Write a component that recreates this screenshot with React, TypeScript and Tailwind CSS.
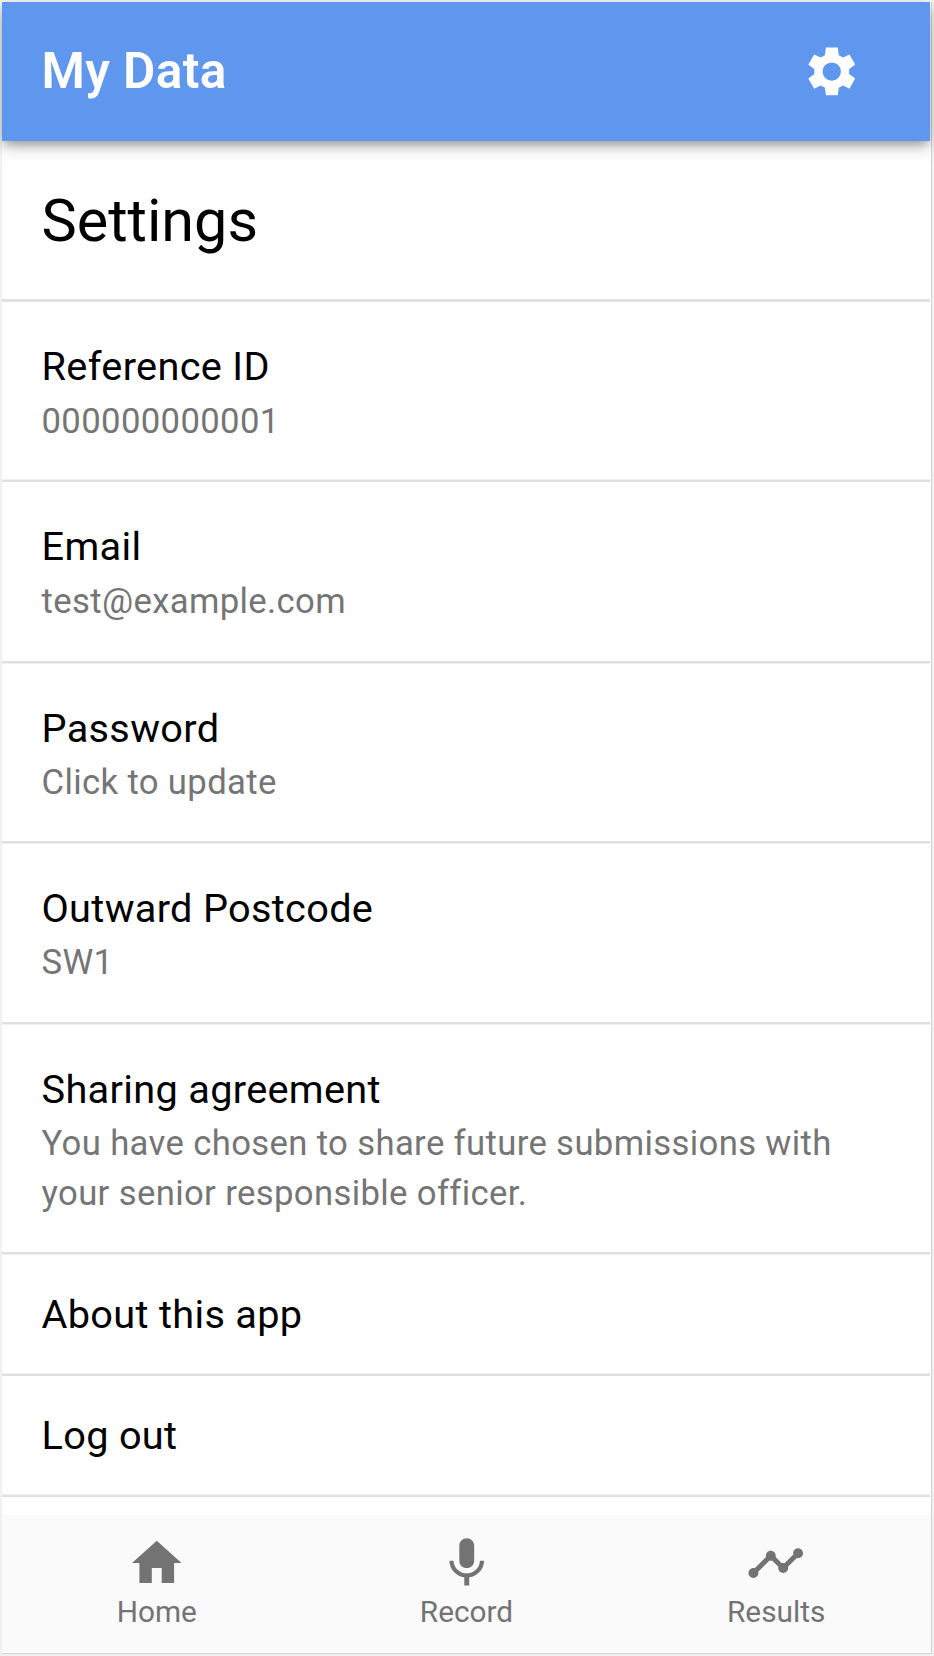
import React from "react";

type Item = { title: string; detail?: string; box: string; gap?: string };

const lightAbove = "shadow-[inset_0_-1px_0_#efefef]";
const lightBelow = "mb-px shadow-[0_1px_0_#efefef]";

const items: Item[] = [
  { title: "Reference ID", detail: "000000000001", box: `h-[180px] pt-[40px] ${lightAbove}`, gap: "mt-[4px]" },
  { title: "Email", detail: "test@example.com", box: `h-[181px] pt-[40px] ${lightBelow}`, gap: "mt-[4px]" },
  { title: "Password", detail: "Click to update", box: `h-[179px] pt-[40px] ${lightBelow}`, gap: "mt-[3px]" },
  { title: "Outward Postcode", detail: "SW1", box: `h-[180px] pt-[40px] ${lightBelow}`, gap: "mt-[3px]" },
  {
    title: "Sharing agreement",
    detail: "You have chosen to share future submissions with your senior responsible officer.",
    box: `h-[229px] pt-[40px] ${lightBelow}`,
    gap: "mt-[3px]",
  },
  { title: "About this app", box: `h-[121px] pt-[35px] ${lightAbove}` },
  { title: "Log out", box: `h-[121px] pt-[35px] ${lightAbove}` },
];

const tabs = [
  { label: "Home", d: "M10 20v-6h4v6h5v-8h3L12 3 2 12h3v8z" },
  {
    label: "Record",
    d: "M12 14c1.66 0 2.99-1.34 2.99-3L15 5c0-1.66-1.34-3-3-3S9 3.34 9 5v6c0 1.66 1.34 3 3 3zm5.3-3c0 3-2.54 5.1-5.3 5.1S6.7 14 6.7 11H5c0 3.41 2.72 6.23 6 6.72V21h2v-3.28c3.28-.48 6-3.3 6-6.72h-1.7z",
  },
  {
    label: "Results",
    d: "M23 8c0 1.1-.9 2-2 2-.18 0-.35-.02-.51-.07l-3.56 3.55c.05.16.07.34.07.52 0 1.1-.9 2-2 2s-2-.9-2-2c0-.18.02-.36.07-.52l-2.55-2.55c-.16.05-.34.07-.52.07s-.36-.02-.52-.07l-4.55 4.56c.05.16.07.33.07.51 0 1.1-.9 2-2 2s-2-.9-2-2 .9-2 2-2c.18 0 .35.02.51.07l4.56-4.55C8.02 9.36 8 9.18 8 9c0-1.1.9-2 2-2s2 .9 2 2c0 .18-.02.36-.07.52l2.55 2.55c.16-.05.34-.07.52-.07s.36.02.52.07l3.55-3.56C19.02 8.35 19 8.18 19 8c0-1.1.9-2 2-2s2 .9 2 2z",
  },
];

const gear =
  "M107.5 52H143L146 75.500L159 82L178 73L195 103L177 117V131L195 145L178 175L159 166L146 172.500L143 195H107.500L104.500 172.500L92 166L72.500 175L55 145L73 131V117L55 103L72.500 73L92 82L104.500 75.500ZM125 96.500a27.500 27.500 0 1 0 0 55a27.500 27.500 0 1 0 0-55Z";

export default function App() {
  return (
    <div className="h-[1656px] w-[934px] bg-[#f1f1f1] pt-[2px] pl-[2px] font-[Roboto,sans-serif]">
      <div className="flex h-[1652px] w-[930px] flex-col border-r border-b border-[#d2d2d2] bg-white pr-px pb-px">
        <header className="relative z-10 flex h-[139px] shrink-0 items-center justify-between bg-[#5e97ed] pr-[68.5px] pl-[39.5px] text-white shadow-[0_5px_10px_-2px_rgba(0,0,0,0.36),0_8px_18px_0_rgba(0,0,0,0.12)]">
          <h1 className="-mt-[1px] text-[49.6px] leading-[60px] font-[600] tracking-[0.4px]">My Data</h1>
          <svg viewBox="36 35.5 178 178" className="size-[59.5px]" fill="currentColor">
            <path fillRule="evenodd" d={gear} />
          </svg>
        </header>
        <main className="flex min-h-0 flex-1 flex-col overflow-hidden">
          <h2 className="h-[161px] shrink-0 border-b-[3px] border-[#e0e0e0] pt-[45px] pl-[39.5px] text-[59.3px] leading-[70px] text-black">
            Settings
          </h2>
          {items.map((item) => (
            <section key={item.title} className={`shrink-0 border-b-[2px] border-[#e0e0e0] pr-[80px] pl-[39.5px] ${item.box}`}>
              <h3 className="text-[39.7px] leading-[50px] tracking-[0.32px] text-black">{item.title}</h3>
              {item.detail && (
                <p className={`text-[34.7px] leading-[50px] tracking-[0.35px] text-[#757575] ${item.gap}`}>{item.detail}</p>
              )}
            </section>
          ))}
        </main>
        <nav className="-mr-px grid h-[137px] shrink-0 grid-cols-3 bg-[#fafafa] text-[#737373]">
          {tabs.map((tab) => (
            <div key={tab.label} className="flex flex-col items-center pt-[18px]">
              <svg viewBox="0 -0.15 24 24" className="size-[59.5px]" fill="currentColor">
                <path d={tab.d} />
              </svg>
              <span className="mt-[1px] text-[29.8px] leading-[36px]">{tab.label}</span>
            </div>
          ))}
        </nav>
      </div>
    </div>
  );
}
